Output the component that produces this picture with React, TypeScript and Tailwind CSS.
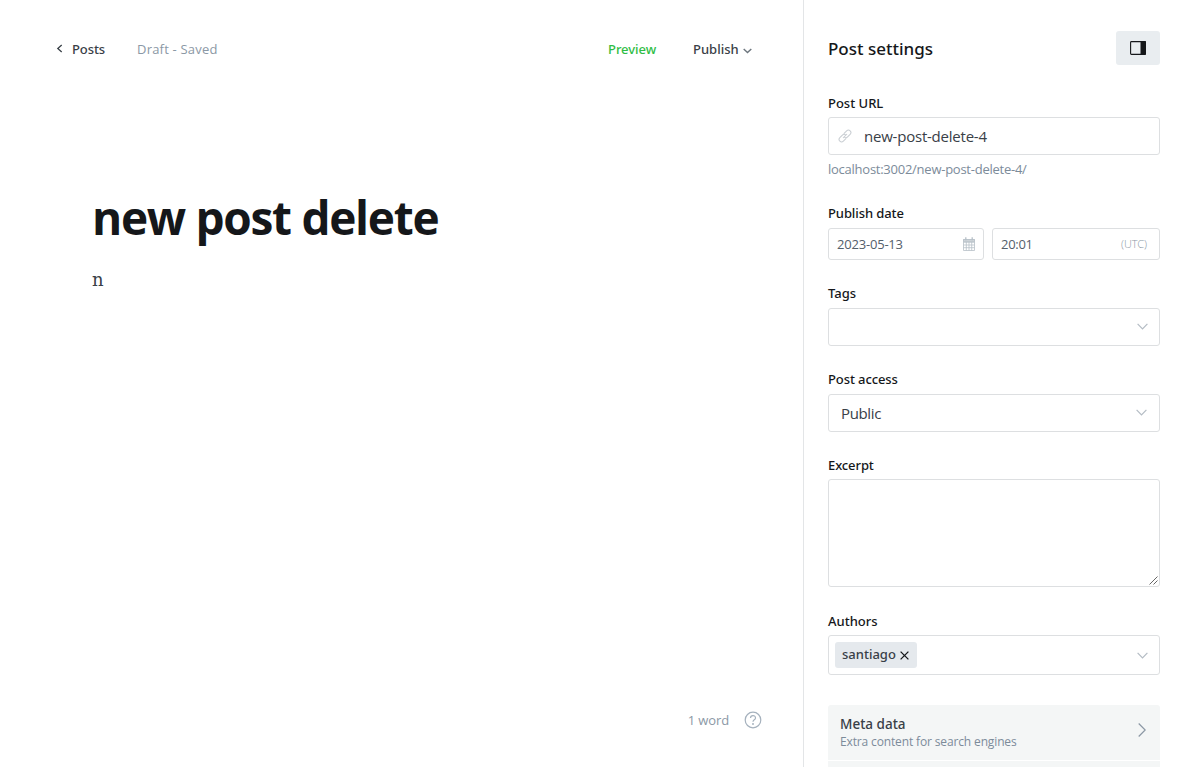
import type { ReactNode } from "react";

const box = "flex items-center rounded-[3px] border border-[#dddfe1] bg-white";
const medium = "font-['Noto_Sans','Open_Sans',sans-serif] font-medium";

function Label({ children, className = "" }: { children: ReactNode; className?: string }) {
  return (
    <div className={`h-4 w-fit whitespace-nowrap text-[13px] leading-4 ${medium} text-[#15171a] ${className}`}>
      {children}
    </div>
  );
}

function Chevron({ className = "" }: { className?: string }) {
  return (
    <svg className={`h-[7px] w-[11px] ${className}`} viewBox="0 0 11 7" fill="none" stroke="#b4bcc4" strokeWidth="1.2">
      <path d="M.6.8 5.5 5.8 10.4.8" />
    </svg>
  );
}

function Editor() {
  return (
    <main className="flex w-[803px] flex-col bg-white">
      <header className="mt-8 flex h-[34px] items-center pr-[51px] pl-14 text-[13px]">
        <svg className="mb-px h-[9px] w-[7px]" viewBox="0 0 7 9" fill="none" stroke="#394047" strokeWidth="1.3">
          <path d="M5.7 1 1.8 4.5 5.7 8" />
        </svg>
        <span className={`mt-px ml-[9px] w-[33px] whitespace-nowrap ${medium} tracking-[-0.1px] text-[#394047]`}>Posts</span>
        <span className="mt-px ml-8 whitespace-nowrap tracking-[0.2px] text-[#8b98a5]">Draft - Saved</span>
        <span className={`mt-px ml-auto w-[50px] whitespace-nowrap ${medium} tracking-[-0.05px] text-[#30bd45]`}>Preview</span>
        <span className={`mt-px ml-[35px] w-[47px] whitespace-nowrap ${medium} text-[#394047]`}>Publish</span>
        <svg className="mt-[3px] ml-[3px] h-[6px] w-[9px]" viewBox="0 0 9 6" fill="none" stroke="#6d767e" strokeWidth="1.4">
          <path d="M.7.9 4.5 4.5 8.3.9" />
        </svg>
      </header>
      <section className="mt-[120px] flex-1 px-[92px]">
        <h1 className="w-fit whitespace-nowrap text-[46px] leading-[62px] font-bold tracking-[-1.3px] text-[#15171a]">new post delete</h1>
        <p className="mt-[17px] font-['DejaVu_Serif',serif] text-[18px] leading-[30px] text-[#394047]">n</p>
      </section>
      <footer className="mb-[38px] flex h-[18px] items-center justify-end pr-[41px]">
        <span className="mt-px mr-[15px] whitespace-nowrap text-[13px] tracking-[-0.1px] text-[#8b98a5]">1 word</span>
        <svg className="h-[18px] w-[18px]" viewBox="0 0 18 18" fill="none" stroke="#a5b1bd" strokeWidth="1.2">
          <circle cx="9" cy="9" r="7.8" />
          <path d="M6.5 7.1C6.5 3.7 11.5 3.8 11.5 6.9 11.5 8.8 9 8.8 9 10.8" />
          <circle cx="9" cy="13" r=".4" />
        </svg>
      </footer>
    </main>
  );
}

function Settings() {
  return (
    <aside className="flex w-[381px] flex-col border-l border-[#e3e5e7] bg-white pr-6 pl-6">
      <div className="mt-[31px] flex h-[34px] shrink-0 items-center justify-between">
        <h2 className={`mt-px whitespace-nowrap text-[17px] ${medium} text-[#15171a]`}>Post settings</h2>
        <button className="flex h-[34px] w-11 items-center justify-center rounded-[3px] bg-[#e9edf0]">
          <svg className="h-[14px] w-4" viewBox="0 0 16 14" fill="none">
            <rect x=".6" y=".6" width="14.8" height="12.8" rx=".8" stroke="#15171a" strokeWidth="1.1" />
            <path d="M10.5 0H15a1 1 0 0 1 1 1v12a1 1 0 0 1-1 1h-4.500z" fill="#15171a" />
          </svg>
        </button>
      </div>

      <Label className="mt-[30px]">Post URL</Label>
      <div className={`${box} mt-[6px] h-[38px] shrink-0 pl-[9px]`}>
        <svg className="h-[14px] w-[14px]" viewBox="0 0 24 24" fill="none" stroke="#c9ced3" strokeWidth="1.8" strokeLinecap="round">
          <path d="m9 15 6-6" />
          <path d="M10.500 7.500 14.800 3.200a4 4 0 0 1 6 6L16.500 13.500a4 4 0 0 1-5.500.4" />
          <path d="M13.500 16.500 9.200 20.800a4 4 0 0 1-6-6L7.500 10.500a4 4 0 0 1 5.500-.4" />
        </svg>
        <span className="ml-3 whitespace-nowrap text-[15px] tracking-[-0.22px] text-[#394047]">new-post-delete-4</span>
      </div>
      <div className="mt-[6px] h-4 w-fit whitespace-nowrap text-[13px] leading-4 tracking-[-0.25px] text-[#7c8b9a]">localhost:3002/new-post-delete-4/</div>

      <Label className="mt-7 tracking-[-0.1px]">Publish date</Label>
      <div className="mt-[7px] flex h-8 shrink-0 gap-2 text-[13px] text-[#54606b]">
        <div className={`${box} w-[156px] justify-between pr-2 pl-2`}>
          <span className="mt-px whitespace-nowrap tracking-[-0.2px]">2023-05-13</span>
          <svg className="h-[14px] w-3" viewBox="0 0 12 14" fill="none" stroke="#b7c0c8" strokeWidth=".8">
            <path d="M.5 2.500h11v11H.5zM.5 5.300h11M.5 8h11M.5 10.700h11M3.300 5v8.500M6 5v8.500M8.700 5v8.500" />
            <path d="M.5 2.500h11v2H.5z" fill="#cdd3d8" />
            <path d="M2.800.3v3M9.200.3v3" strokeWidth="1.300" />
          </svg>
        </div>
        <div className={`${box} flex-1 justify-between pr-3 pl-2`}>
          <span className="mt-px whitespace-nowrap tracking-[-0.3px]">20:01</span>
          <span className="whitespace-nowrap text-[11px] font-light tracking-[-0.1px] text-[#8b98a5]">(UTC)</span>
        </div>
      </div>

      <Label className="mt-[25px]">Tags</Label>
      <div className={`${box} mt-[7px] h-[38px] shrink-0 justify-end pr-[11px]`}>
        <Chevron className="-mt-px" />
      </div>

      <Label className="mt-[25px] tracking-[-0.1px]">Post access</Label>
      <div className={`${box} mt-[7px] h-[38px] shrink-0 justify-between pr-3 pl-3`}>
        <span className="whitespace-nowrap text-[15px] tracking-[-0.35px] text-[#394047]">Public</span>
        <Chevron className="-mt-px" />
      </div>

      <Label className="mt-[25px] tracking-[-0.1px]">Excerpt</Label>
      <div className={`${box} mt-[6px] h-[108px] shrink-0 items-end justify-end p-[1px]`}>
        <svg className="h-[9px] w-[9px]" viewBox="0 0 9 9" stroke="#555" strokeWidth=".9">
          <path d="M.5 8.500 8.500.5M4.500 8.500 8.500 4.500" />
        </svg>
      </div>

      <Label className="mt-[26px]">Authors</Label>
      <div className={`${box} mt-[6px] h-10 shrink-0 justify-between pr-[11px] pl-[6px]`}>
        <div className="flex h-[26px] w-[82px] items-center rounded-[3px] bg-[#e5e9ed] pl-[7px]">
          <span className={`w-[53px] whitespace-nowrap text-[13px] ${medium} text-[#394047]`}>santiago</span>
          <svg className="ml-[5px] h-[9px] w-[9px]" viewBox="0 0 9 9" stroke="#15171a" strokeWidth="1.300">
            <path d="m.6.6 7.800 7.800M8.400.6.6 8.400" />
          </svg>
        </div>
        <Chevron />
      </div>

      <div className="mt-[30px] flex h-[55px] shrink-0 items-center justify-between rounded-t-[3px] bg-[#f4f6f6] pr-[14px] pl-3">
        <div>
          <div className={`w-fit whitespace-nowrap text-[13.500px] leading-[18px] ${medium} text-[#394047]`}>Meta data</div>
          <div className="w-fit whitespace-nowrap text-[12px] leading-[17px] tracking-[-0.14px] text-[#7c8b9a]">Extra content for search engines</div>
        </div>
        <svg className="mb-[5px] h-[14px] w-2" viewBox="0 0 8 14" fill="none" stroke="#8b98a5" strokeWidth="1.200">
          <path d="M.7.500 7.200 7 .7 13.500" />
        </svg>
      </div>
      <div className="mt-px h-[6px] shrink-0 bg-[#f4f6f6]" />
    </aside>
  );
}

export default function App() {
  return (
    <div className="flex h-[767px] w-[1184px] overflow-hidden bg-white font-['Open_Sans',sans-serif]">
      <Editor />
      <Settings />
    </div>
  );
}
